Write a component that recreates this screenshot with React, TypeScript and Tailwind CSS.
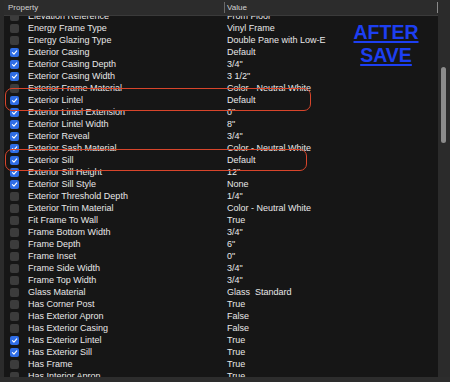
import React from "react";

type Row = { name: string; value: string; checked: boolean };

const rows: Row[] = [
  { name: "Elevation Reference", value: "From Floor", checked: false },
  { name: "Energy Frame Type", value: "Vinyl Frame", checked: false },
  { name: "Energy Glazing Type", value: "Double Pane with Low-E", checked: false },
  { name: "Exterior Casing", value: "Default", checked: true },
  { name: "Exterior Casing Depth", value: "3/4\"", checked: true },
  { name: "Exterior Casing Width", value: "3 1/2\"", checked: true },
  { name: "Exterior Frame Material", value: "Color - Neutral White", checked: false },
  { name: "Exterior Lintel", value: "Default", checked: true },
  { name: "Exterior Lintel Extension", value: "0\"", checked: true },
  { name: "Exterior Lintel Width", value: "8\"", checked: true },
  { name: "Exterior Reveal", value: "3/4\"", checked: true },
  { name: "Exterior Sash Material", value: "Color - Neutral White", checked: true },
  { name: "Exterior Sill", value: "Default", checked: true },
  { name: "Exterior Sill Height", value: "12\"", checked: true },
  { name: "Exterior Sill Style", value: "None", checked: true },
  { name: "Exterior Threshold Depth", value: "1/4\"", checked: false },
  { name: "Exterior Trim Material", value: "Color - Neutral White", checked: false },
  { name: "Fit Frame To Wall", value: "True", checked: false },
  { name: "Frame Bottom Width", value: "3/4\"", checked: false },
  { name: "Frame Depth", value: "6\"", checked: false },
  { name: "Frame Inset", value: "0\"", checked: false },
  { name: "Frame Side Width", value: "3/4\"", checked: false },
  { name: "Frame Top Width", value: "3/4\"", checked: false },
  { name: "Glass Material", value: "Glass  Standard", checked: false },
  { name: "Has Corner Post", value: "True", checked: false },
  { name: "Has Exterior Apron", value: "False", checked: false },
  { name: "Has Exterior Casing", value: "False", checked: false },
  { name: "Has Exterior Lintel", value: "True", checked: true },
  { name: "Has Exterior Sill", value: "True", checked: true },
  { name: "Has Frame", value: "True", checked: false },
  { name: "Has Interior Apron", value: "True", checked: false },
];

function Check({ on }: { on: boolean }) {
  if (!on) {
    return <div className="w-[9px] h-[9px] rounded-[2px] bg-[#3c3c3c] shrink-0" />;
  }
  return (
    <div className="w-[9px] h-[9px] rounded-[2px] bg-[#2f6de6] shrink-0 flex items-center justify-center">
      <svg width="7" height="7" viewBox="0 0 10 10">
        <path d="M2 5.2 L4.2 7.4 L8.2 2.6" fill="none" stroke="#ffffff" strokeWidth="1.6" strokeLinecap="round" strokeLinejoin="round" />
      </svg>
    </div>
  );
}

export default function App() {
  return (
    <div
      className="w-[450px] h-[382px] bg-[#2b2b2b] flex flex-col overflow-hidden relative"
      style={{ fontFamily: '"Liberation Sans", Arial, sans-serif' }}
    >
      <div className="flex flex-1 min-h-0">
        <div className="w-[4px] bg-[#2b2b2b]" />
        <div className="flex-1 flex flex-col bg-[#161616] min-w-0">
          <div className="h-[16px] bg-[#2c2c2c] border-b border-[#3a3a3a] flex items-center text-[8px] text-[#d2d2d2] shrink-0">
            <div className="w-[220px] pl-[4px] flex items-center h-full">Property</div>
            <div className="w-[1px] h-[11px] bg-[#6a6a6a]" />
            <div className="flex-1 pl-[2px] h-full flex items-center">Value</div>
            <div className="w-[1px] h-[11px] bg-[#8a8a8a]" />
          </div>
          <div className="flex-1 overflow-hidden min-h-0">
            <div className="-mt-[6px]">
              {rows.map((r) => (
                <div key={r.name} className="h-[12px] flex items-center text-[9px] text-[#e8e8e8] leading-none">
                  <div className="w-[220px] flex items-center pl-[6px] gap-[9px]">
                    <Check on={r.checked} />
                    <span className="whitespace-nowrap">{r.name}</span>
                  </div>
                  <div className="pl-[3px] whitespace-pre">{r.value}</div>
                </div>
              ))}
            </div>
          </div>
        </div>
        <div className="w-[12px] bg-[#2b2b2b] flex justify-center pt-[67px]">
          <div className="w-[5px] h-[76px] rounded-full bg-[#8c8c8c] ml-[-2px]" />
        </div>
      </div>
      <div className="h-[5px] bg-[#2d2d2d] shrink-0" />

      <div className="absolute left-[5px] top-[88px] w-[306px] h-[23px] border-[1.5px] border-[#d8452b] rounded-[7px]" />
      <div className="absolute left-[5px] top-[149px] w-[302px] h-[22px] border-[1.5px] border-[#d8452b] rounded-[7px]" />

      <div className="absolute left-[336px] top-[21px] w-[100px] flex flex-col items-center text-[19.5px] leading-[23px] font-bold text-[#1d3ff2] underline decoration-[2px] underline-offset-[2px]">
        <span>AFTER</span>
        <span>SAVE</span>
      </div>
    </div>
  );
}
